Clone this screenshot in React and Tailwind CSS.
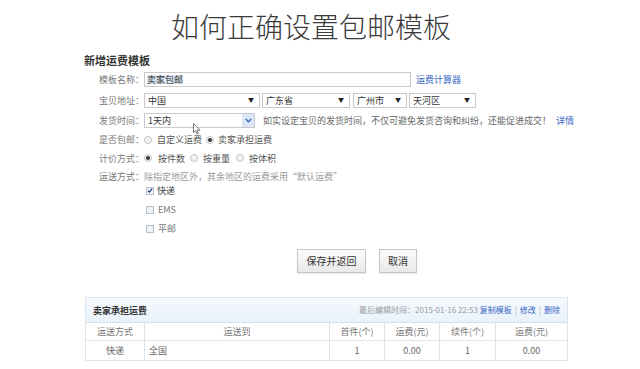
import React from "react";

function Arrow() {
  return <span className="text-[6px] leading-none text-[#222]">▼</span>;
}

function Select({ cls, text }) {
  return (
    <div className={`h-[15px] border border-[#c9c9c9] bg-white flex items-center justify-between pl-[3px] pr-[5px] ${cls}`}>
      <span className="text-[9px] text-[#333] leading-none">{text}</span>
      <Arrow />
    </div>
  );
}

function Radio({ checked }) {
  return (
    <span className="w-[8px] h-[8px] rounded-full border border-[#c4c4c4] bg-[#f3f3f3] flex items-center justify-center shrink-0">
      {checked && <span className="w-[4px] h-[4px] rounded-full bg-[#333]" />}
    </span>
  );
}

function Check({ checked }) {
  return (
    <span className="w-[8px] h-[8px] border border-[#b8c0cc] bg-[#eef2f7] flex items-center justify-center shrink-0">
      {checked && (
        <svg width="7" height="7" viewBox="0 0 7 7">
          <path d="M1 3.6 L2.8 5.4 L6 1.4" fill="none" stroke="#1d3f8c" strokeWidth="1.4" />
        </svg>
      )}
    </span>
  );
}

function Label({ children }) {
  return <div className="w-[60px] text-right text-[9px] text-[#777] leading-none shrink-0">{children}</div>;
}

export default function App() {
  return (
    <div className="w-[640px] h-[369px] bg-white overflow-hidden relative font-['Noto_Sans_CJK_SC',sans-serif]">
      <div className="h-[52px] flex items-center justify-center pr-[18px]">
        <h1 className="text-[28px] leading-none font-light text-[#3a3a3a]">如何正确设置包邮模板</h1>
      </div>

      <div className="ml-[84px]">
        <div className="h-[16px] flex items-center text-[11px] font-bold text-[#333] leading-none">新增运费模板</div>

        <div className="h-[22px] flex items-center">
          <Label>模板名称：</Label>
          <div className="w-[267px] h-[15px] border border-[#c9c9c9] bg-white flex items-center pl-[2px]">
            <span className="text-[9px] text-[#333] leading-none bg-[#dbe6f5]">卖家包邮</span>
          </div>
          <span className="ml-[5px] text-[9px] text-[#3a66c4] leading-none">运费计算器</span>
        </div>

        <div className="h-[20px] flex items-center">
          <Label>宝贝地址：</Label>
          <Select cls="w-[116px]" text="中国" />
          <Select cls="w-[88px] ml-[2px]" text="广东省" />
          <Select cls="w-[54px] ml-[3px]" text="广州市" />
          <Select cls="w-[67px] ml-[2px]" text="天河区" />
        </div>

        <div className="h-[21px] flex items-center">
          <Label>发货时间：</Label>
          <div className="w-[111px] h-[15px] border border-[#c9c9c9] bg-white flex items-center justify-between pl-[3px]">
            <span className="text-[9px] text-[#333] leading-none">1天内</span>
            <span className="w-[12px] h-[13px] bg-[#dbe7f6] flex items-center justify-center">
              <svg width="7" height="5" viewBox="0 0 7 5">
                <path d="M0.8 1 L3.5 3.8 L6.2 1" fill="none" stroke="#3d6cc0" strokeWidth="1.4" />
              </svg>
            </span>
          </div>
          <span className="ml-[8px] text-[9px] text-[#666] leading-none whitespace-nowrap">如实设定宝贝的发货时间，不仅可避免发货咨询和纠纷，还能促进成交！</span>
          <span className="ml-[5px] text-[9px] text-[#3a66c4] leading-none">详情</span>
        </div>

        <div className="h-[17px] flex items-center">
          <Label>是否包邮：</Label>
          <Radio />
          <span className="ml-[5px] text-[9px] text-[#555] leading-none">自定义运费</span>
          <span className="ml-[4px]"><Radio checked /></span>
          <span className="ml-[4px] text-[9px] text-[#555] leading-none">卖家承担运费</span>
        </div>

        <div className="h-[20px] flex items-center">
          <Label>计价方式：</Label>
          <Radio checked />
          <span className="ml-[6px] text-[9px] text-[#555] leading-none">按件数</span>
          <span className="ml-[5px]"><Radio /></span>
          <span className="ml-[5px] text-[9px] text-[#555] leading-none">按重量</span>
          <span className="ml-[6px]"><Radio /></span>
          <span className="ml-[5px] text-[9px] text-[#555] leading-none">按体积</span>
        </div>

        <div className="h-[17px] flex items-center">
          <Label>运送方式：</Label>
          <span className="text-[9px] text-[#9a9a9a] leading-none whitespace-nowrap">除指定地区外，其余地区的运费采用“默认运费”</span>
        </div>

        <div className="ml-[62px] flex flex-col gap-[8px]">
          <div className="h-[11px] flex items-center">
            <Check checked />
            <span className="ml-[3px] text-[9px] text-[#444] leading-none">快递</span>
          </div>
          <div className="h-[11px] flex items-center">
            <Check />
            <span className="ml-[4px] text-[9px] text-[#777] leading-none">EMS</span>
          </div>
          <div className="h-[11px] flex items-center">
            <Check />
            <span className="ml-[4px] text-[9px] text-[#777] leading-none">平邮</span>
          </div>
        </div>
      </div>

      <div className="mt-[15px] ml-[297px] flex items-center gap-[13px]">
        <button className="w-[69px] h-[24px] border border-[#c6c6c6] bg-gradient-to-b from-[#fbfbfb] to-[#e9e9e9] text-[10px] text-[#333] leading-none shadow-[0_1px_1px_rgba(0,0,0,0.08)]">保存并返回</button>
        <button className="w-[38px] h-[24px] border border-[#c6c6c6] bg-gradient-to-b from-[#fbfbfb] to-[#e9e9e9] text-[10px] text-[#333] leading-none shadow-[0_1px_1px_rgba(0,0,0,0.08)]">取消</button>
      </div>

      <div className="mt-[24px] ml-[85px] w-[483px] border border-[#dde5ec] text-[9px] leading-none">
        <div className="h-[25px] bg-gradient-to-b from-[#f5f9fd] to-[#e9f2fb] flex items-center justify-between px-[7px] border-b border-[#d6e0ea]">
          <span className="font-bold text-[#333]">卖家承担运费</span>
          <span className="text-[#9a9a9a] text-[8px] whitespace-nowrap">
            最后编辑时间：2015-01-16 22:53 <span className="text-[#3a66c4]">复制模板</span>
            <span className="mx-[3px] text-[#aaa]">|</span>
            <span className="text-[#3a66c4]">修改</span>
            <span className="mx-[3px] text-[#aaa]">|</span>
            <span className="text-[#3a66c4]">删除</span>
          </span>
        </div>
        <div className="grid grid-cols-[58px_185px_55px_55px_56px_72px] h-[17px] text-[#777]">
          <div className="flex items-center justify-center">运送方式</div>
          <div className="flex items-center justify-center border-l border-[#dde5ec]">运送到</div>
          <div className="flex items-center justify-center border-l border-[#dde5ec]">首件(个)</div>
          <div className="flex items-center justify-center border-l border-[#dde5ec]">运费(元)</div>
          <div className="flex items-center justify-center border-l border-[#dde5ec]">续件(个)</div>
          <div className="flex items-center justify-center border-l border-[#dde5ec]">运费(元)</div>
        </div>
        <div className="grid grid-cols-[58px_185px_55px_55px_56px_72px] h-[20px] text-[#666] border-t border-[#dde5ec]">
          <div className="flex items-center justify-center">快递</div>
          <div className="flex items-center pl-[4px] border-l border-[#dde5ec]">全国</div>
          <div className="flex items-center justify-center border-l border-[#dde5ec]">1</div>
          <div className="flex items-center justify-center border-l border-[#dde5ec]">0.00</div>
          <div className="flex items-center justify-center border-l border-[#dde5ec]">1</div>
          <div className="flex items-center justify-center border-l border-[#dde5ec]">0.00</div>
        </div>
      </div>

      <svg className="absolute left-[193px] top-[123px]" width="8" height="12" viewBox="0 0 8 12">
        <path d="M0.5 0.5 L0.5 9.5 L2.6 7.6 L4 11 L5.3 10.4 L4 7.2 L7 7.2 Z" fill="#fff" stroke="#555" strokeWidth="0.8" />
      </svg>
    </div>
  );
}
